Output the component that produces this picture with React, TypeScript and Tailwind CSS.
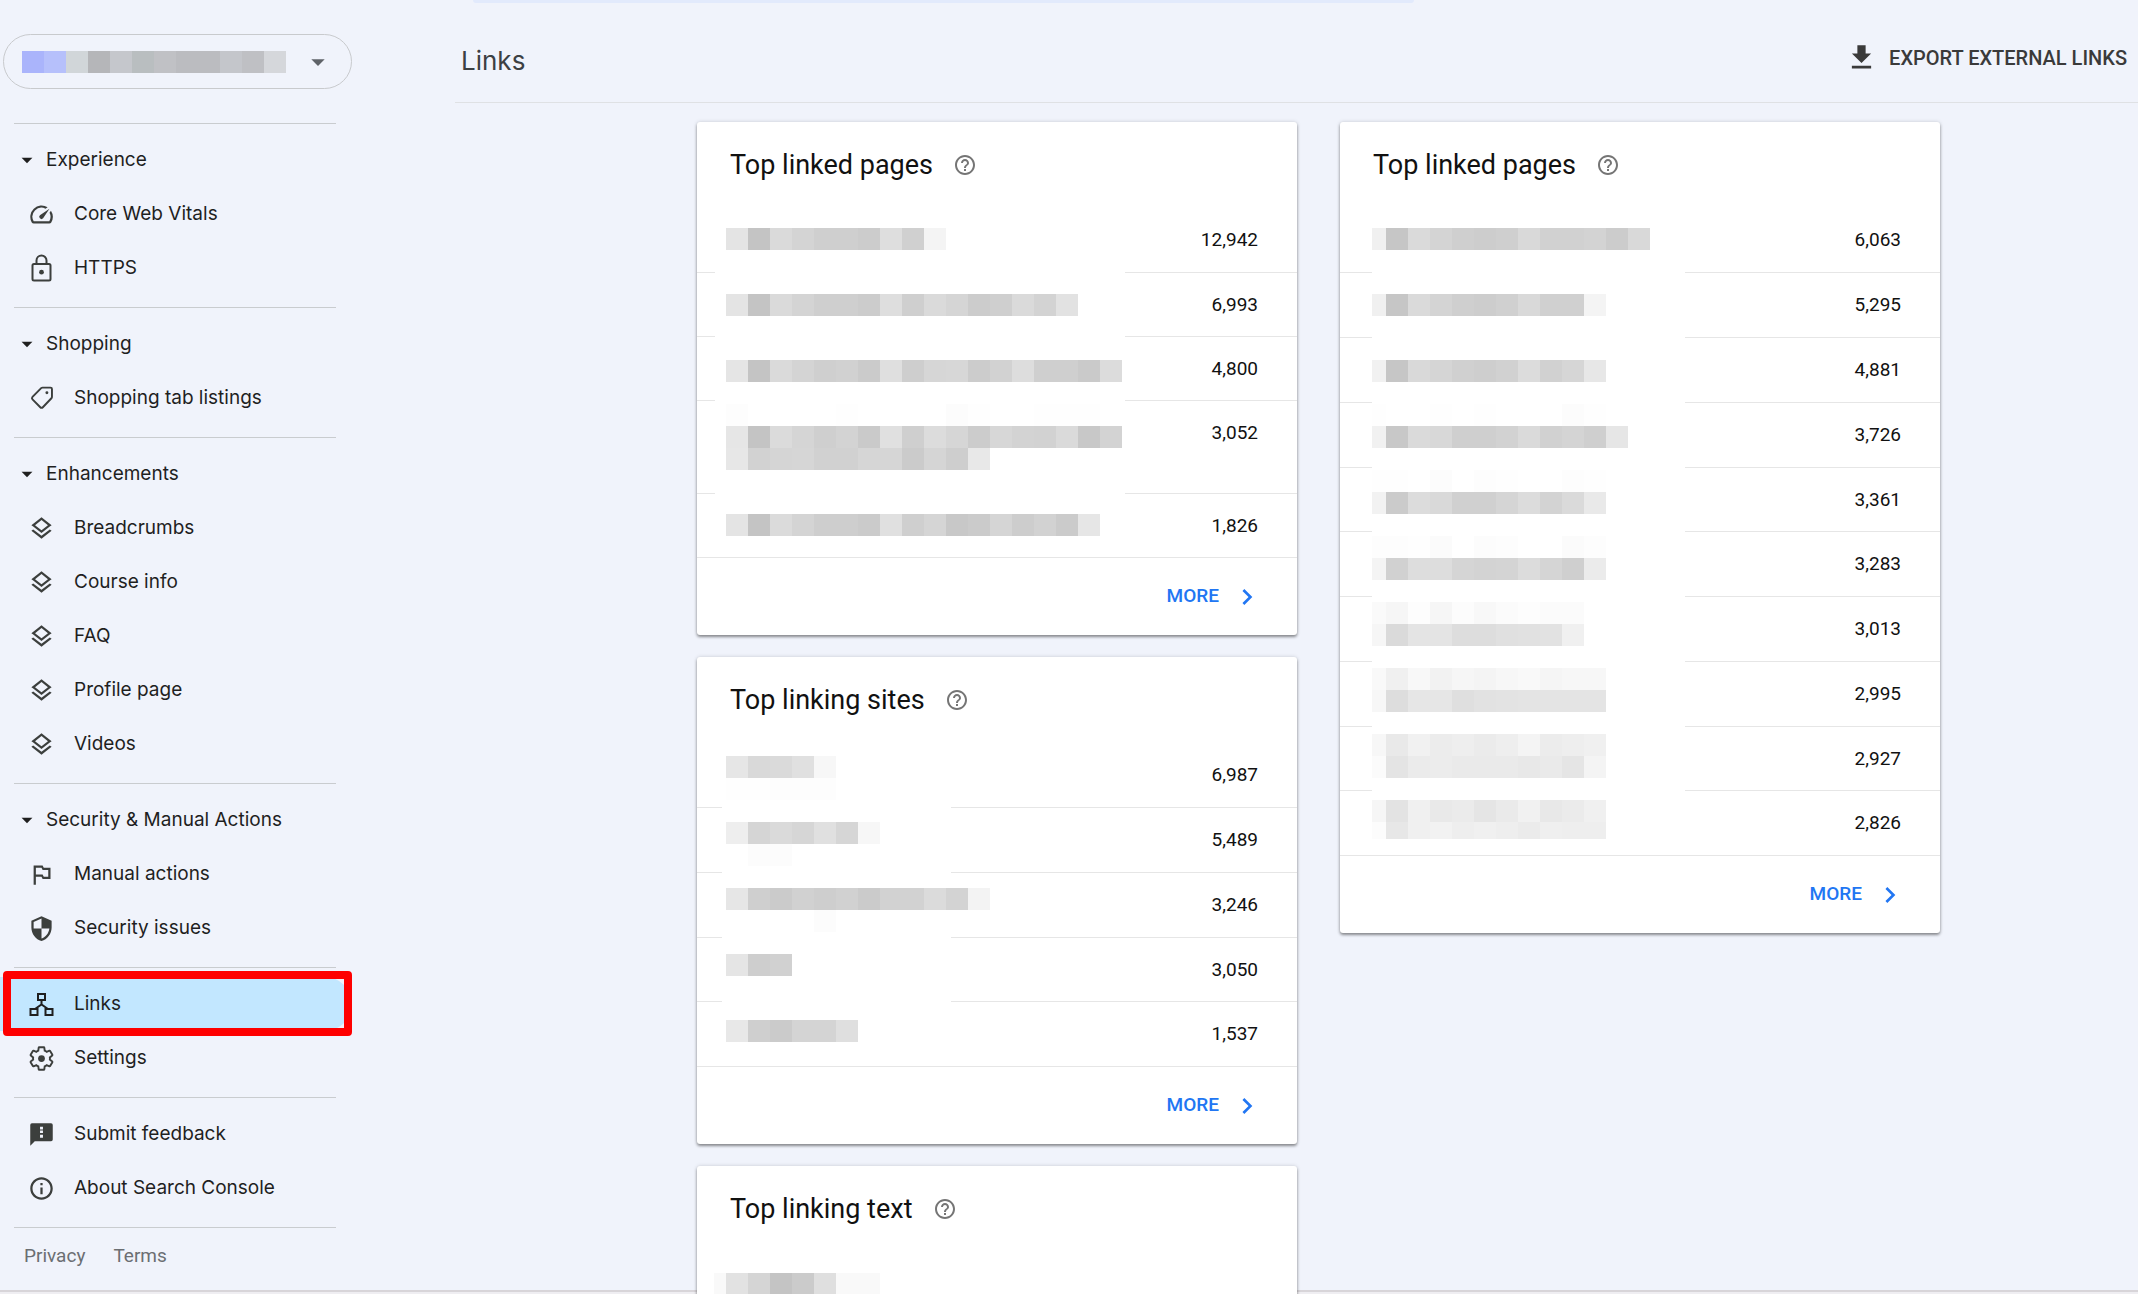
import { useId } from "react";
import type { ReactNode } from "react";
import {
  MdArrowDropDown,
  MdChevronRight,
  MdFileDownload,
  MdHelpOutline,
  MdInfoOutline,
  MdOutlineLayers,
  MdOutlinedFlag,
  MdSecurity,
} from "react-icons/md";

/* ---------- Redaction mosaics ---------- */

type MosaicLine = { y: number; cells: string; h?: number };

const CELL = 22;

/** Rows of square cells; each cell is a two-digit hex grey. */
function Mosaic({
  width,
  height,
  lines,
  start = 0,
  lead = CELL,
  className = "",
}: {
  width: number;
  height: number;
  lines: MosaicLine[];
  start?: number;
  lead?: number;
  className?: string;
}) {
  return (
    <svg
      aria-hidden="true"
      width={width}
      height={height}
      shapeRendering="crispEdges"
      className={"pointer-events-none block overflow-visible " + className}
    >
      <rect width={width} height={height} fill="#fff" />
      {lines.map((line) =>
        line.cells.split(" ").map((c, i) => (
          <rect
            key={line.y + "-" + i}
            x={i === 0 ? start : start + lead + (i - 1) * CELL}
            y={line.y}
            width={i === 0 ? lead : CELL}
            height={line.h ?? CELL}
            fill={"#" + c + c + c}
          />
        )),
      )}
    </svg>
  );
}

const linkedPagesMosaic: MosaicLine[] = [
  { y: 8, cells: "e4 c4 da d4 cf cf cc de d0 f4" },
  { y: 74, cells: "e4 c4 da d4 cf cf cc de cf da d5 cc cf da d3 e2" },
  { y: 140, cells: "e5 c4 da d4 cf d1 cb df ce d6 d7 cc d2 dd cf cf ca dc" },
  { y: 184, cells: "fd ff ff ff ff fe ff ff ff ff fc fe ff ff fe fe fe" },
  { y: 206, cells: "e6 c4 db d5 cf d3 ca e0 cf dc d6 cc d7 d3 d2 da c8 d3" },
  { y: 228, cells: "e7 d2 d5 d6 d1 d1 d6 d6 cb d5 ce e8" },
  { y: 294, cells: "e4 c4 db d4 ce ce cb e0 cf d5 c8 cb d5 cd d2 cb e6" },
];

const linkingSitesMosaic: MosaicLine[] = [
  { y: 8, cells: "e6 d9 da e0 f7" },
  { y: 30, cells: "fe fe fd fd fd" },
  { y: 74, cells: "ee d5 da d6 e0 d6 f7" },
  { y: 96, cells: "ff fc fc" },
  { y: 140, cells: "e6 cf cb d1 ce d1 cb d2 d2 db d3 f3" },
  { y: 162, cells: "ff ff ff ff fc" },
  { y: 206, cells: "e5 ce d1" },
  { y: 272, cells: "e8 cf cb d4 d4 df" },
];

const linkingTextMosaic: MosaicLine[] = [{ y: 0, cells: "f9 e2 d5 c4 cb df f9 f9" }];

const internalPagesMosaic: MosaicLine[] = [
  { y: 8, cells: "f0 c6 da d4 cf cd cf d9 d1 d1 d3 cc d9" },
  { y: 74, cells: "f0 c6 da d4 cf cd d0 d9 d0 d0 f4" },
  { y: 140, cells: "f1 c6 d9 d5 d0 ce d1 dc d1 d6 e7" },
  { y: 184, cells: "fe ff ff fe ff fe ff ff ff fc fe" },
  { y: 206, cells: "f1 c8 da d8 cf cf d2 da d1 d4 cf e6" },
  { y: 250, cells: "fe fe ff fc ff fd fe ff ff fd fe" },
  { y: 272, cells: "f2 cb dc d9 d0 d0 d5 dc d3 da e9" },
  { y: 316, cells: "fd fd fe fb ff fc fd ff ff fb fd" },
  { y: 338, cells: "f4 d1 dd dd d5 d3 d4 dc d5 cf eb" },
  { y: 382, cells: "fa f6 fd f6 fc f8 fb fd fb fb" },
  { y: 404, cells: "f6 da e4 e4 dd dd e0 e1 e2 f0" },
  { y: 448, cells: "f9 f0 f8 f2 f6 f4 f7 f9 f5 f7 f7" },
  { y: 470, cells: "f7 dd e6 e6 df e2 e3 e4 e4 e4 e4" },
  { y: 514, cells: "f7 e9 f1 ec ee eb ee f4 ec ee f0" },
  { y: 536, cells: "fb e4 eb ec ea ea ea e8 ea e5 f4" },
  { y: 580, cells: "f6 e3 f0 e9 eb e5 ea f1 e8 eb f0" },
  { y: 602, cells: "fc e7 f0 f2 ee f0 ee eb ef ee ee", h: 17 },
];

const propertyColors = [
  "#aab4fb", "#b6c0fb", "#d1d6d9", "#b5b6b9", "#c5c7cc", "#b9bec0",
  "#c0c1c5", "#bbbcc0", "#bbbcc0", "#c4c6cb", "#bfc0c4", "#d5d7db",
];

/* ---------- Custom icons ---------- */

function SpeedIcon() {
  return (
    <svg width="27" height="27" viewBox="0 0 24 24" fill="currentColor">
      <path d="m20.38 8.57-1.23 1.85a8 8 0 0 1-.22 7.58H5.07A8 8 0 0 1 15.58 6.85l1.85-1.23A10 10 0 0 0 3.35 19a2 2 0 0 0 1.72 1h13.85a2 2 0 0 0 1.74-1 10 10 0 0 0-.27-10.44z" />
      <path d="M10.59 15.41a2 2 0 0 0 2.83 0l5.66-8.49-8.49 5.66a2 2 0 0 0 0 2.83z" />
    </svg>
  );
}

function LockIcon() {
  return (
    <svg width="21" height="28" viewBox="0 0 21 28" fill="none" stroke="currentColor" strokeWidth="2">
      <rect x="1.500" y="10" width="18" height="16.500" rx="1.500" />
      <path d="M5.500 10V6.500a5 5 0 0 1 10 0V10" />
      <circle cx="10.500" cy="18.200" r="2.400" fill="currentColor" stroke="none" />
    </svg>
  );
}

function TagIcon() {
  return (
    <svg width="27" height="27" viewBox="0 0 24 24" fill="none" stroke="currentColor" strokeWidth="1.7" strokeLinejoin="round">
      <path d="M13 2.300h7a1.300 1.300 0 0 1 1.300 1.300v6.900a1.800 1.800 0 0 1-.5 1.300l-7.600 8a1.600 1.600 0 0 1-2.300 0L4 12.800a1.600 1.600 0 0 1 0-2.200l7.700-7.800a1.800 1.800 0 0 1 1.300-.5z" />
      <circle cx="16.800" cy="6.900" r="1.300" fill="currentColor" stroke="none" />
    </svg>
  );
}

function LinksIcon() {
  return (
    <svg width="27" height="27" viewBox="0 0 27 27" fill="none" stroke="currentColor" strokeWidth="2">
      <path d="M10 3h7v6h-7zM2.500 18h7v6h-7zM17.500 18h7v6h-7z" />
      <path d="M13.500 9v5M7 18l6.500-4.500L20 18" />
    </svg>
  );
}

function SettingsIcon() {
  return (
    <svg width="27" height="27" viewBox="0 0 24 24" fill="none" stroke="currentColor" strokeWidth="1.7">
      <path d="M19.43 12.98c.04-.32.07-.64.07-.98 0-.34-.03-.66-.07-.98l2.11-1.65c.19-.15.24-.42.12-.64l-2-3.46a.5.5 0 00-.61-.22l-2.49 1c-.52-.4-1.08-.73-1.690-.98l-.38-2.650A.488.488 0 0014 2h-4c-.25 0-.46.18-.49.42l-.38 2.650c-.61.25-1.170.59-1.690.98l-2.490-1a.566.566 0 00-.18-.03c-.17 0-.34.09-.43.25l-2 3.460c-.13.22-.07.49.12.64l2.110 1.650c-.04.32-.07.65-.07.98 0 .33.03.66.07.98l-2.110 1.650c-.19.15-.24.42-.12.64l2 3.460a.5.5 0 00.61.22l2.490-1c.52.4 1.080.73 1.690.98l.38 2.650c.03.24.24.42.49.42h4c.25 0 .46-.18.49-.42l.38-2.650c.61-.25 1.170-.59 1.690-.98l2.490 1c.06.02.12.03.18.03.17 0 .34-.09.43-.25l2-3.460c.12-.22.07-.49-.12-.64l-2.110-1.650z" />
      <circle cx="12" cy="12" r="3" fill="currentColor" stroke="none" />
    </svg>
  );
}

function FeedbackIcon() {
  return (
    <svg width="27" height="27" viewBox="0 0 24 24" fill="currentColor">
      <path d="M20.500 2h-17A1.500 1.500 0 0 0 2 3.500V22l4-4h14.500a1.500 1.500 0 0 0 1.500-1.500v-13A1.500 1.500 0 0 0 20.500 2z" />
      <path d="M10.700 5h2.600v2.600h-2.600zM10.700 8.500h2.600v2.200h-2.600zM10.700 12.300h2.600v2.600h-2.600z" fill="#f0f3fb" />
    </svg>
  );
}

/* ---------- Sidebar ---------- */

function NavGroup({ title, children }: { title?: string; children: ReactNode }) {
  return (
    <section>
      <hr className="mr-4 ml-3.5 border-[#c9cccf]" />
      <div className="pt-[9px] pb-3">
        {title && (
          <button type="button" className="flex h-[54px] w-full items-center pl-3.5 text-left">
            <MdArrowDropDown size={26} className="mr-1.5" />
            {title}
          </button>
        )}
        {children}
      </div>
    </section>
  );
}

function NavItem({ icon, label, current = false }: { icon: ReactNode; label: string; current?: boolean }) {
  return (
    <a
      href="#"
      aria-current={current ? "page" : undefined}
      className={
        current
          ? "relative flex h-[54px] items-center rounded-r-full bg-[#c2e7ff]"
          : "flex h-[54px] items-center"
      }
    >
      <span className={current ? "ml-6 flex w-[34px] justify-center" : "ml-6 flex w-[34px] justify-center text-[#3c3f3d]"}>
        {icon}
      </span>
      <span className="ml-4">{label}</span>
      {current && (
        <span className="pointer-events-none absolute -top-1.5 right-0 -bottom-[5px] left-[3px] rounded-[4px] border-8 border-[#fe0000]" />
      )}
    </a>
  );
}

function Sidebar() {
  return (
    <nav
      aria-label="Search Console"
      className="w-[352px] shrink-0 pt-[34px] text-[19px] text-[#1f1f1f]"
    >
      <button
        type="button"
        aria-label="Select property"
        className="mr-px ml-[3px] flex h-[55px] w-[349px] items-center rounded-full border border-[#c8cacd] pr-[17px] pl-[18px]"
      >
        <svg aria-hidden="true" width="264" height="22" shapeRendering="crispEdges" className="block">
          {propertyColors.map((c, i) => (
            <rect key={i} x={i * CELL} width={CELL} height={CELL} fill={c} />
          ))}
        </svg>
        <MdArrowDropDown size={32} className="ml-auto text-[#5f6368]" />
      </button>
      <div className="h-[34px]" />
      <NavGroup title="Experience">
        <NavItem icon={<SpeedIcon />} label="Core Web Vitals" />
        <NavItem icon={<LockIcon />} label="HTTPS" />
      </NavGroup>
      <NavGroup title="Shopping">
        <NavItem icon={<TagIcon />} label="Shopping tab listings" />
      </NavGroup>
      <NavGroup title="Enhancements">
        {["Breadcrumbs", "Course info", "FAQ", "Profile page", "Videos"].map((label) => (
          <NavItem key={label} icon={<MdOutlineLayers size={27} />} label={label} />
        ))}
      </NavGroup>
      <NavGroup title="Security & Manual Actions">
        <NavItem icon={<MdOutlinedFlag size={27} />} label="Manual actions" />
        <NavItem icon={<MdSecurity size={27} />} label="Security issues" />
      </NavGroup>
      <NavGroup>
        <NavItem icon={<LinksIcon />} label="Links" current />
        <NavItem icon={<SettingsIcon />} label="Settings" />
      </NavGroup>
      <NavGroup>
        <NavItem icon={<FeedbackIcon />} label="Submit feedback" />
        <NavItem icon={<MdInfoOutline size={27} />} label="About Search Console" />
      </NavGroup>
      <hr className="mr-4 ml-3.5 border-[#c9cccf]" />
      <div className="flex gap-7 pt-3.5 pl-6 font-[Roboto,sans-serif] text-[19px] text-[#6b6e72]">
        <a href="#">Privacy</a>
        <a href="#">Terms</a>
      </div>
    </nav>
  );
}

/* ---------- Cards ---------- */

function Card({
  title,
  rows,
  tableClass = "",
  mosaic,
}: {
  title: string;
  rows: { value: string; tall?: boolean }[];
  tableClass?: string;
  mosaic: ReactNode;
}) {
  const id = useId();
  return (
    <section
      aria-labelledby={id}
      className="relative w-[600px] rounded-[3px] bg-white shadow-[0_2px_3px_rgba(0,0,0,0.4),0_0_4px_rgba(0,0,0,0.14)]"
    >
      <div className="flex h-[86px] items-center pl-[33px]">
        <h2 id={id} className="text-[27px] text-[#111]">
          {title}
        </h2>
        <button type="button" aria-label={"Help: " + title} className="ml-5 text-[#757575]">
          <MdHelpOutline size={24} />
        </button>
      </div>
      {rows.length > 0 && (
        <>
          <table aria-labelledby={id} className={"w-full " + tableClass}>
            <tbody>
              {rows.map((row) => (
                <tr
                  key={row.value}
                  className={
                    row.tall ? "h-[92px] border-b border-[#e6e6e6]" : "h-16 border-b border-[#e6e6e6]"
                  }
                >
                  <td className="pt-[19px] pr-[39px] text-right align-top text-[19px] leading-[26px] text-[#111]">
                    {row.value}
                  </td>
                </tr>
              ))}
            </tbody>
          </table>
          <div className="flex h-[77px] items-center justify-end pr-[34px]">
            <button type="button" className="flex items-center gap-3 text-[19px] font-medium text-[#2176f3]">
              MORE
              <MdChevronRight size={32} />
            </button>
          </div>
        </>
      )}
      {mosaic}
    </section>
  );
}

const values = (list: string[]) => list.map((value) => ({ value }));

export default function App() {
  return (
    <div className="flex h-screen flex-col overflow-hidden bg-[#f0f3fb] font-[Inter,sans-serif] text-[#1f1f1f]">
      <div className="flex min-h-0 flex-1">
        <Sidebar />
        <main className="flex min-w-0 flex-1 flex-col pl-[103px]">
          <div className="mr-[724px] ml-[18px] h-[3px] shrink-0 rounded-b-full bg-[#e2eafc]" />
          <header className="flex h-[100px] shrink-0 items-center justify-between border-b border-[#dfe1e4] pt-2.5 pr-[11px]">
            <h1 className="mt-1.5 pl-1.5 text-[26px] text-[#3c4043]">Links</h1>
            <button
              type="button"
              className="flex items-center gap-[11px] font-[Roboto,sans-serif] text-xl font-medium text-[#3a3a3a]"
            >
              <MdFileDownload size={33} />
              EXPORT EXTERNAL LINKS
            </button>
          </header>
          <div className="flex items-start justify-center gap-[43px] pt-[19px] pl-11 font-[Roboto,sans-serif]">
            <div className="flex flex-col gap-[22px]">
              <Card
                title="Top linked pages"
                rows={[
                  { value: "12,942" },
                  { value: "6,993" },
                  { value: "4,800" },
                  { value: "3,052", tall: true },
                  { value: "1,826" },
                ]}
                tableClass="h-[350px]"
                mosaic={
                  <Mosaic
                    width={410}
                    height={327}
                    start={11}
                    lines={linkedPagesMosaic}
                    className="absolute top-[98px] left-[18px]"
                  />
                }
              />
              <Card
                title="Top linking sites"
                rows={values(["6,987", "5,489", "3,246", "3,050", "1,537"])}
                tableClass="h-[324px]"
                mosaic={
                  <Mosaic
                    width={229}
                    height={300}
                    start={4}
                    lines={linkingSitesMosaic}
                    className="absolute top-[91px] left-[25px]"
                  />
                }
              />
              <Card
                title="Top linking text"
                rows={[]}
                mosaic={
                  <div className="h-[120px] pt-[21px] pl-[17px]">
                    <Mosaic width={166} height={22} lead={12} lines={linkingTextMosaic} />
                  </div>
                }
              />
            </div>
            <Card
              title="Top linked pages"
              rows={values([
                "6,063", "5,295", "4,881", "3,726", "3,361",
                "3,283", "3,013", "2,995", "2,927", "2,826",
              ])}
              tableClass="h-[648px]"
              mosaic={
                <Mosaic
                  width={313}
                  height={620}
                  lead={14}
                  lines={internalPagesMosaic}
                  className="absolute top-[98px] left-8"
                />
              }
            />
          </div>
        </main>
      </div>
      <div className="h-1 shrink-0 border-t-2 border-[#d8d5d9] bg-[#efeef2]" />
    </div>
  );
}
